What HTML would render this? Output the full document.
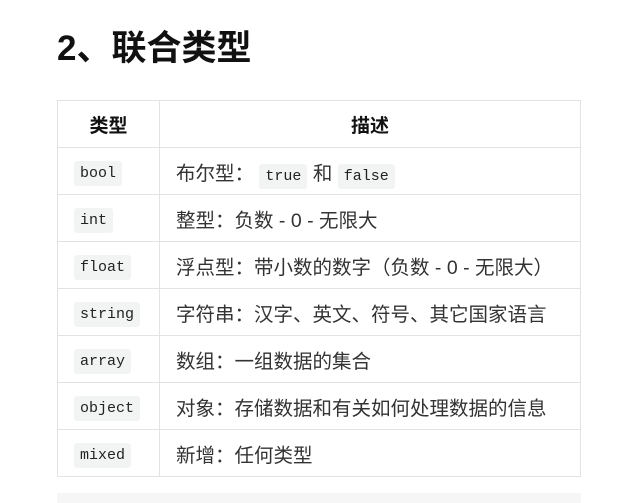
<!DOCTYPE html>
<html><head><meta charset="utf-8"><style>
body{margin:0;background:#fff;width:642px;height:502px;overflow:hidden;position:relative;font-family:"Liberation Sans","Noto Sans CJK SC",sans-serif;color:#333}
h2{position:absolute;left:57px;top:27px;margin:0;font-size:35px;font-weight:bold;color:#111;line-height:44px}
table{position:absolute;left:57px;top:100px;border-collapse:collapse;width:524px}
td,th{border:1px solid #e3e3e3;height:46px;padding:0;font-size:19.5px}
th{font-weight:bold;color:#111;text-align:center;font-size:19px}
td:first-child{width:101px;padding-left:16px;box-sizing:border-box}
td:last-child{padding-left:16px}
code{font-family:"Liberation Mono",monospace;font-size:15px;background:#f2f3f3;padding:4px 6px;border-radius:3px;color:#222}
.bot{position:absolute;left:57px;top:493px;width:524px;height:10px;background:#f6f6f6}
</style></head><body>
<h2>2、联合类型</h2>
<table>
<tr><th style="width:101px">类型</th><th>描述</th></tr>
<tr><td><code>bool</code></td><td>布尔型： <code>true</code> 和 <code>false</code></td></tr>
<tr><td><code>int</code></td><td>整型：负数 - 0 - 无限大</td></tr>
<tr><td><code>float</code></td><td>浮点型：带小数的数字（负数 - 0 - 无限大）</td></tr>
<tr><td><code>string</code></td><td>字符串：汉字、英文、符号、其它国家语言</td></tr>
<tr><td><code>array</code></td><td>数组：一组数据的集合</td></tr>
<tr><td><code>object</code></td><td>对象：存储数据和有关如何处理数据的信息</td></tr>
<tr><td><code>mixed</code></td><td>新增：任何类型</td></tr>
</table>
<div class="bot"></div>
</body></html>
